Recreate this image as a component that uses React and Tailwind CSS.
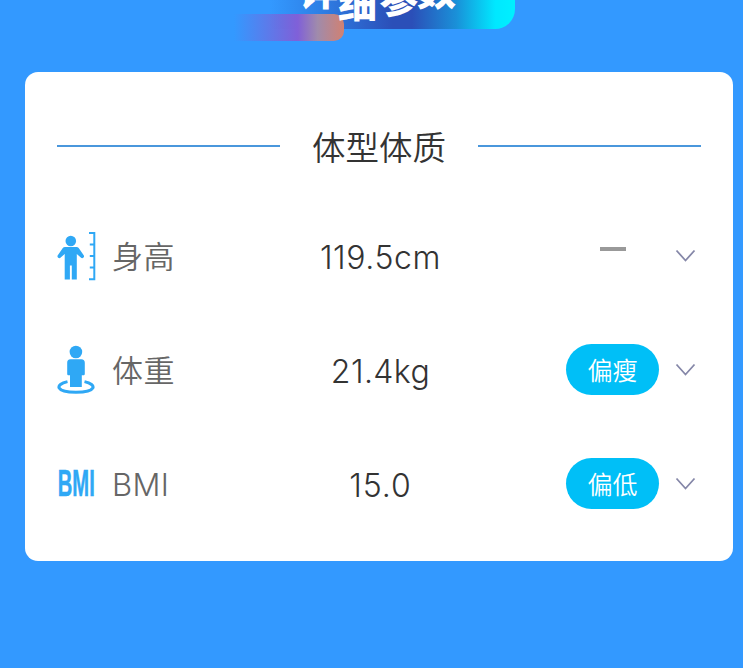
const cjk = "font-['Noto_Sans_CJK_SC',sans-serif]";
const latin = "font-['Inter','Noto_Sans_CJK_SC',sans-serif]";

function HeightIcon() {
  return (
    <svg width="40" height="52" viewBox="0 0 40 52" fill="#2fa8f5">
      <circle cx="13.800" cy="10" r="5.300" />
      <path d="M8 16h11.500c1 0 1.700.4 2.200 1l5 7.200c1.300 2-1.200 3.900-2.900 2.400l-4-3.600v25.600h-5V34.500h-1.900V48.600H7.700V23l-4 3.600C2 28.100-.5 26.200.8 24.200l5-7.200c.5-.6 1.200-1 2.200-1z" />
      <path d="M32 2H37.300V48.300H32M37.300 13.500h-4.500M37.300 25h-4.500M37.300 36.500h-4.500" fill="none" stroke="#2fa8f5" strokeWidth="2" />
    </svg>
  );
}

function WeightIcon() {
  return (
    <svg width="40" height="52" viewBox="0 0 40 52" fill="#2fa8f5">
      <circle cx="18.900" cy="7" r="6.300" />
      <path d="M13.500 14.200h10.800c2.300 0 3.500 1.300 3.500 3.500v11c0 1-.6 1.500-1.500 1.500h-1.500v11.700H13V30.200h-1.300c-1 0-1.500-.5-1.500-1.500v-11c0-2.200 1-3.500 3.300-3.500z" />
      <path d="M10.500 36.600C-2.500 39.500 -1.500 47.200 19 47.200S40.500 39.500 27.500 36.600" fill="none" stroke="#2fa8f5" strokeWidth="3" />
    </svg>
  );
}

function BmiIcon() {
  return (
    <svg width="40" height="52" viewBox="0 0 40 52" fill="#2fa8f5">
      <text x="0.800" y="37.300" textLength="37" lengthAdjust="spacingAndGlyphs" stroke="#2fa8f5" strokeWidth="0.500" className="font-['Liberation_Sans',sans-serif] text-[37px] font-bold">BMI</text>
    </svg>
  );
}

const rows = [
  { Icon: HeightIcon, label: '身高', value: '119.5cm', spacing: 'tracking-[0.600px]', status: null },
  { Icon: WeightIcon, label: '体重', value: '21.4kg', spacing: 'tracking-[0.400px]', status: '偏瘦' },
  { Icon: BmiIcon, label: 'BMI', value: '15.0', spacing: 'tracking-[0.900px]', status: '偏低' },
];

const banner = [
  { char: '详', cls: 'left-[299px] top-[-31px]' },
  { char: '细', cls: 'left-[338px] top-[-18px]' },
  { char: '参', cls: 'left-[379px] top-[-23px] -rotate-3' },
  { char: '数', cls: 'left-[417px] top-[-31px]' },
];

function Header() {
  return (
    <header className="relative h-[72px] shrink-0 overflow-hidden">
      <div className="absolute left-[270px] top-[-40px] h-[69px] w-[245px] rounded-br-[20px] bg-[linear-gradient(90deg,#3399ff00_0%,#2e80e6_20%,#2b4fb8_50%,#2b4fb8_58%,#1a90d8_76%,#00e8ff_92%,#00f0ff_100%)]" />
      <div className="absolute left-[234px] top-[14px] h-[27px] w-[110px] rounded-r-[10px] bg-[linear-gradient(90deg,#8060d800_0%,#8060d8_58%,#a08bab_76%,#d18172_100%)]" />
      {banner.map(({ char, cls }) => (
        <span key={char} className={`absolute text-[39px] leading-[39px] font-black text-white ${cjk} ${cls}`}>{char}</span>
      ))}
    </header>
  );
}

function Row({ Icon, label, value, spacing, status }) {
  return (
    <div className="grid h-[114px] grid-cols-[210px_1fr_210px] items-center">
      <div className="flex items-center gap-[15px] pt-px">
        <Icon />
        <span className={`pt-px text-[31px] leading-[44px] font-[350] tracking-[0.400px] text-[#666] ${latin}`}>{label}</span>
      </div>
      <div className={`pt-[3px] pl-[3px] text-center text-[32px] leading-[44px] font-[350] whitespace-nowrap text-[#333] ${latin} ${spacing}`}>{value}</div>
      <div className="flex items-center justify-end gap-4 pr-[5px]">
        <div className="flex w-[93px] justify-center">
          {status ? (
            <span className={`mb-[2px] flex h-[51px] w-[93px] items-center justify-center rounded-full bg-[#00bff7] text-[25px] leading-none font-[350] text-white ${cjk}`}>{status}</span>
          ) : (
            <span className="mb-[14px] h-1 w-[26px] bg-[#999]" />
          )}
        </div>
        <svg width="21" height="14" viewBox="0 0 21 14" fill="none" stroke="#8587a8" strokeWidth="1.800">
          <path d="M1.500 1.500 10.500 11.500 19.500 1.500" />
        </svg>
      </div>
    </div>
  );
}

export default function App() {
  return (
    <main className="flex h-[668px] w-[743px] flex-col overflow-hidden bg-[#3399ff]">
      <Header />
      <section className="ml-[25px] h-[489px] w-[708px] rounded-[13px] bg-white px-8 pt-[49px]">
        <div className="flex h-[50px] items-center justify-between">
          <div className="h-[2px] w-[223px] bg-[#4a97dc]" />
          <h1 className={`text-[33.500px] leading-[50px] font-[350] text-[#333] ${cjk}`}>体型体质</h1>
          <div className="h-[2px] w-[223px] bg-[#4a97dc]" />
        </div>
        <div className="pt-7">
          {rows.map((row) => (
            <Row key={row.label} {...row} />
          ))}
        </div>
      </section>
    </main>
  );
}
